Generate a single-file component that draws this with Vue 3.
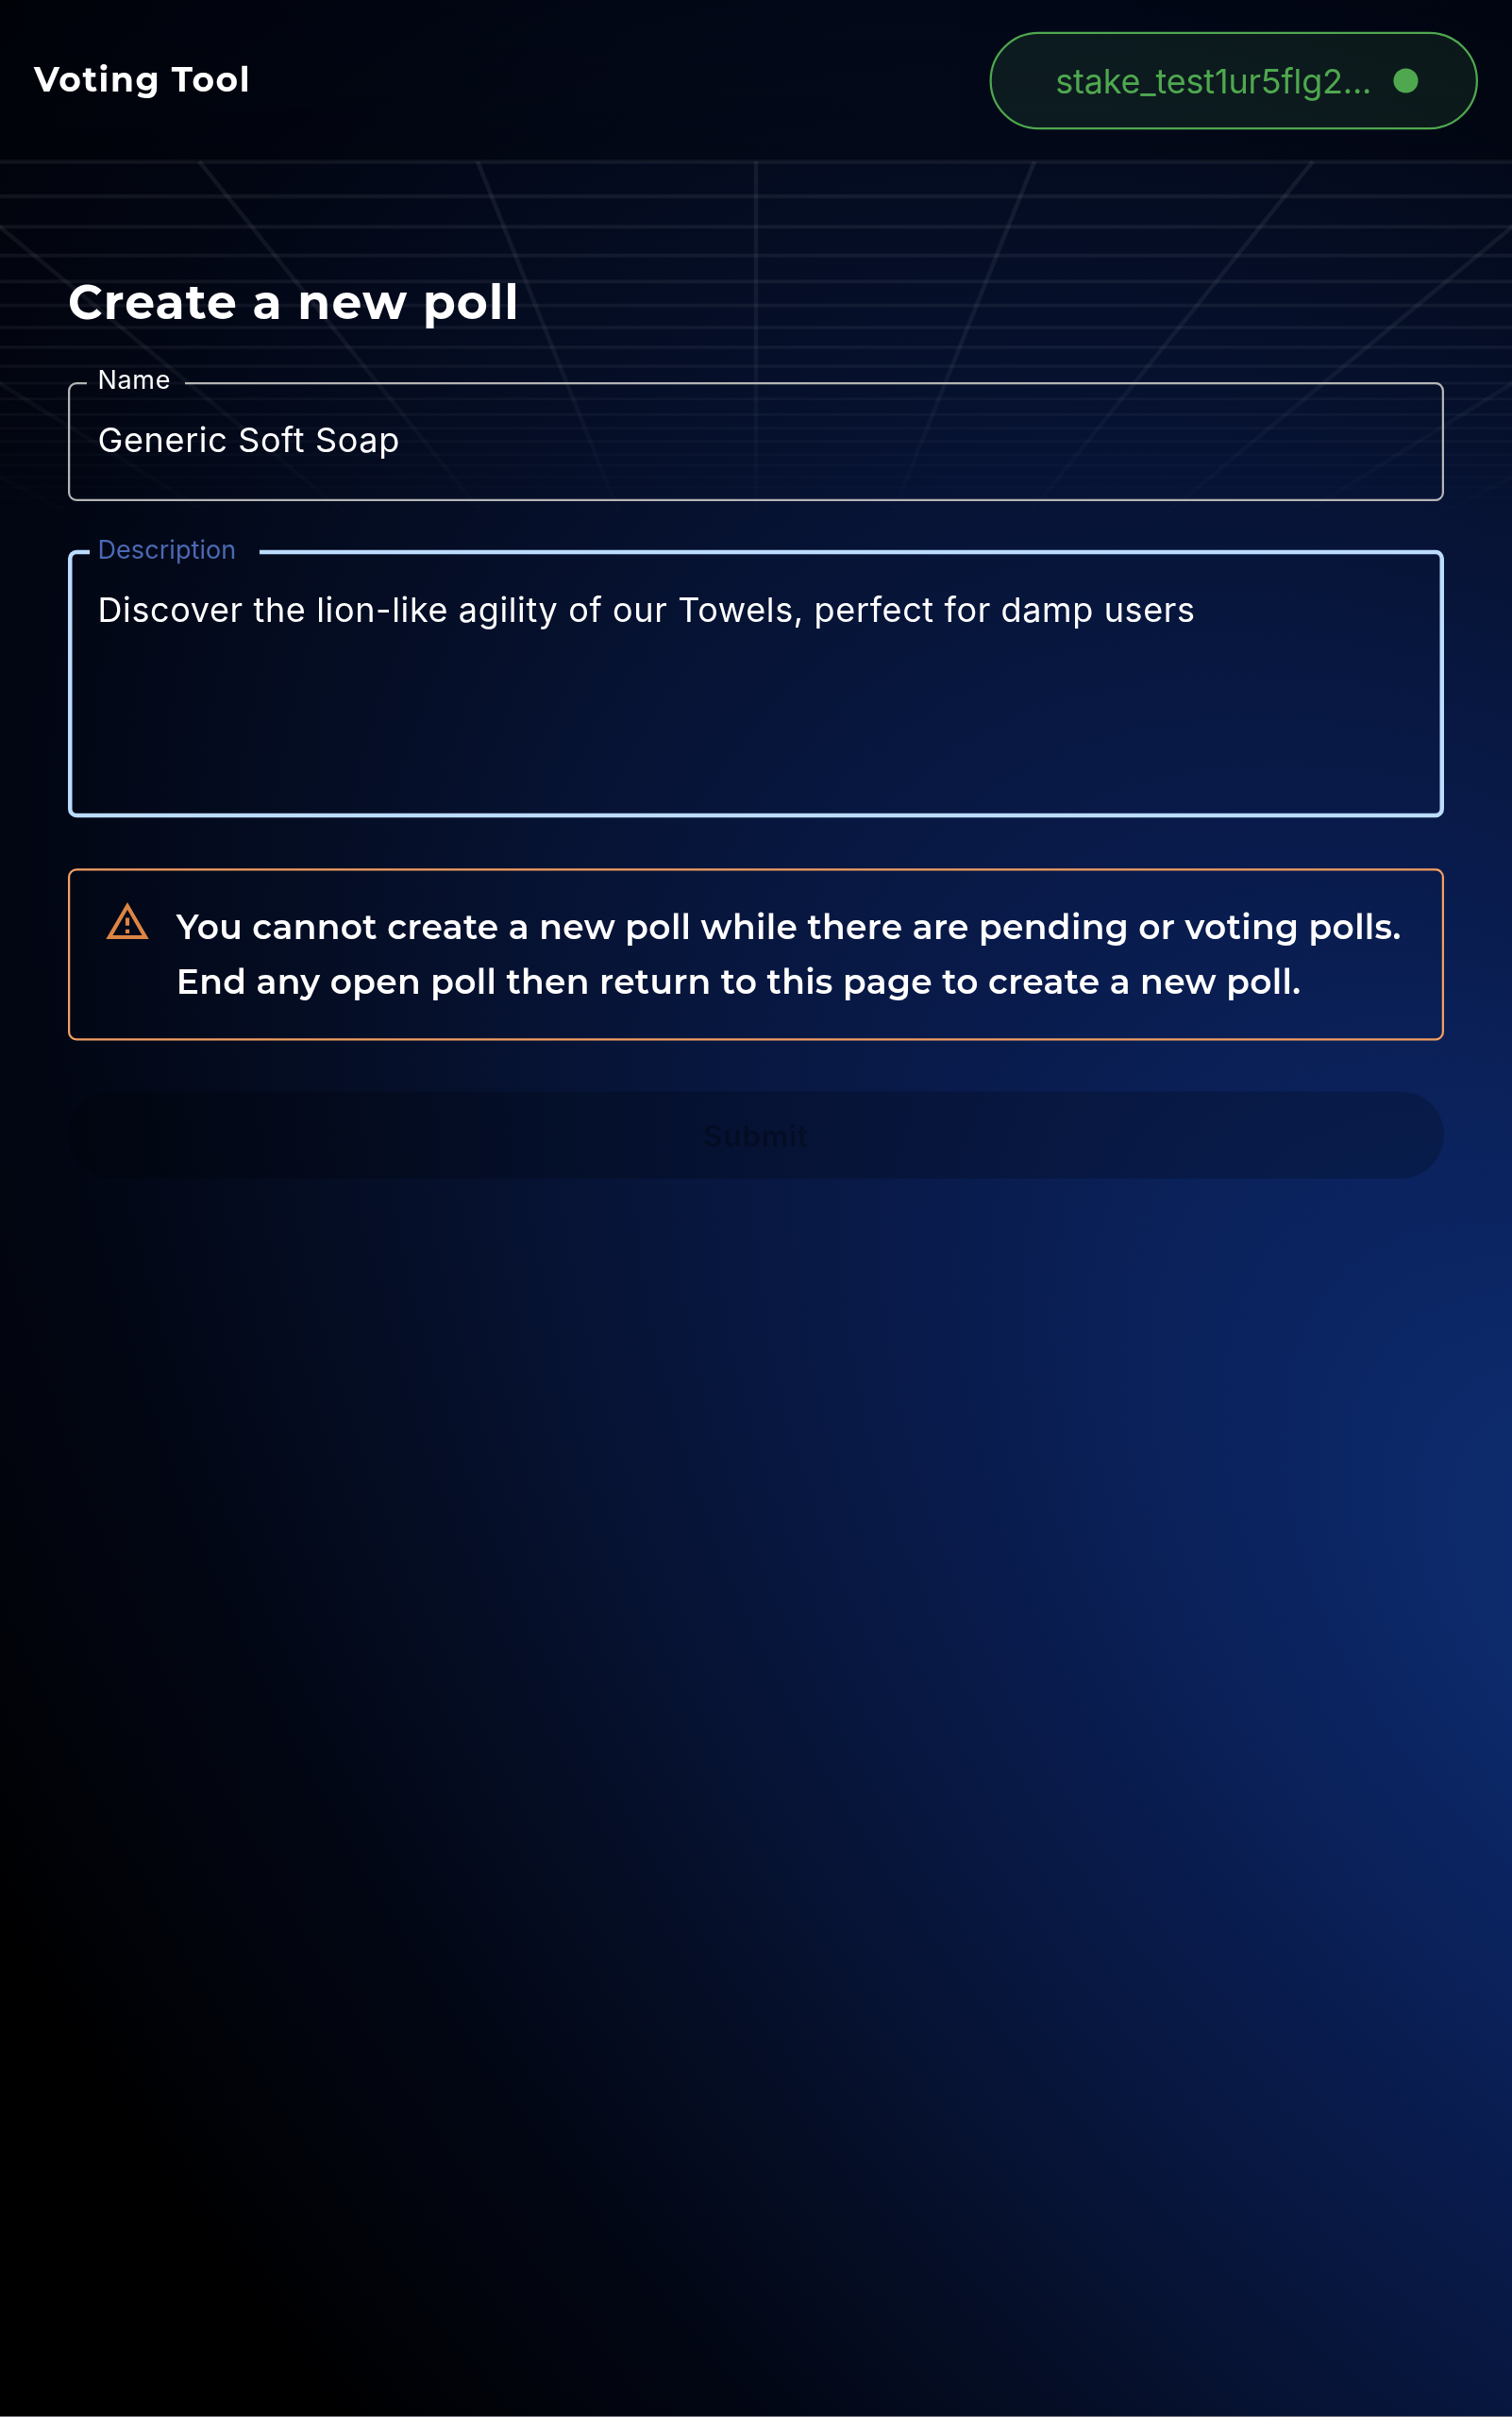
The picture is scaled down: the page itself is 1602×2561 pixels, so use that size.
<script setup>
const rows = [171.3, 208, 240.3, 270.7, 298.3, 323.7, 347, 368, 388, 406, 422.7, 439.3, 453.7, 467.7, 481.7, 493.3, 505.7, 516.7, 526.7, 536.7]
const columns = Array.from({ length: 17 }, (_, i) => i - 8)
</script>

<template>
  <div class="page">
    <svg class="backdrop" viewBox="0 0 1602 2561" aria-hidden="true">
      <defs>
        <radialGradient id="glow" gradientUnits="userSpaceOnUse" cx="0" cy="0" r="1" gradientTransform="translate(1770 1720) rotate(47) scale(2700 1620)">
          <stop offset="0" stop-color="#0e2d73" />
          <stop offset=".09" stop-color="#0d2a6b" />
          <stop offset=".2" stop-color="#0b2460" />
          <stop offset=".36" stop-color="#091b4c" />
          <stop offset=".5" stop-color="#07153a" />
          <stop offset=".64" stop-color="#050e26" />
          <stop offset=".8" stop-color="#020613" />
          <stop offset=".92" stop-color="#010309" />
          <stop offset="1" stop-color="#000001" />
        </radialGradient>
        <linearGradient id="fade" x1="0" x2="0" y1="168" y2="565" gradientUnits="userSpaceOnUse">
          <stop offset="0" stop-color="#fff" />
          <stop offset=".5" stop-color="#fff" stop-opacity=".8" />
          <stop offset="1" stop-color="#fff" stop-opacity="0" />
        </linearGradient>
        <mask id="gridMask" maskUnits="userSpaceOnUse" x="0" y="168" width="1602" height="397">
          <rect y="168" width="1602" height="397" fill="url(#fade)" />
        </mask>
      </defs>
      <rect width="1602" height="2561" fill="url(#glow)" />
      <g mask="url(#gridMask)" stroke="#fff" stroke-opacity=".065" fill="none">
        <line v-for="(y, i) in rows" :key="y" x1="0" x2="1602" :y1="y" :y2="y" :stroke-width="4.4 - i * 0.13" />
        <line v-for="c in columns" :key="c" :x1="801 + c * 295" y1="171" :x2="801 + c * 295 * 0.4625" y2="565" stroke-width="4.6" />
      </g>
    </svg>

    <div class="screen">
      <header class="header">
        <div class="brand">Voting Tool</div>
        <button class="wallet">
          <span class="address">stake_test1ur5flg2...</span>
          <svg class="dot" viewBox="0 0 12 12"><circle cx="6" cy="6" r="5.8" /></svg>
        </button>
      </header>

      <main class="content">
        <h1 class="title">Create a new poll</h1>

        <fieldset class="field name">
          <legend><span class="label">Name</span></legend>
          <div class="value">Generic Soft Soap</div>
        </fieldset>

        <fieldset class="field description">
          <legend><span class="label">Description</span></legend>
          <div class="value">Discover the lion-like agility of our Towels, perfect for damp users</div>
        </fieldset>

        <div class="alert">
          <svg class="warn" viewBox="0 0 24 24"><path d="M12 5.99L19.53 19H4.47L12 5.99M12 2L1 21h22L12 2zm1 14h-2v2h2v-2zm0-6h-2v4h2v-4z" /></svg>
          <div class="message">
            You cannot create a new poll while there are pending or voting polls.<br />
            End any open poll then return to this page to create a new poll.
          </div>
        </div>

        <button class="submit" disabled>Submit</button>
      </main>
    </div>
  </div>
</template>

<style>
body { margin: 0; background: #000; }
</style>

<style scoped>
.page {
  position: relative;
  box-sizing: border-box;
  width: 1602px;
  height: 2561px;
  overflow: hidden;
  border-bottom: 1px solid #77757f;
  font-family: Inter, sans-serif;
  color: #fff;
}
.backdrop { position: absolute; inset: 0; width: 1602px; height: 2561px; }
/* The layout is authored at 712px and enlarged to the page. */
.screen {
  position: relative;
  width: 712px;
  height: 1138px;
  transform: scale(2.25);
  transform-origin: 0 0;
}
.header {
  display: flex;
  justify-content: space-between;
  align-items: center;
  box-sizing: border-box;
  height: 76px;
  padding: 0 16px;
  background: linear-gradient(rgba(0, 0, 0, 0), rgba(0, 0, 0, .25));
}
.brand {
  font: 700 16px/24px Montserrat, Inter, sans-serif;
  letter-spacing: .66px;
  white-space: nowrap;
}
.wallet {
  display: flex;
  align-items: center;
  justify-content: space-between;
  box-sizing: border-box;
  width: 230px;
  height: 46px;
  padding: 0 27.4px 0 30px;
  border: 1px solid #4fa84f;
  border-radius: 23px;
  background: rgba(79, 168, 79, .12);
  color: #4fa84f;
  font: 400 16px/20px Inter, sans-serif;
}
.address { letter-spacing: -.09px; white-space: nowrap; }
.dot { flex: none; width: 12px; height: 12px; fill: #4fa84f; }
.content {
  display: flex;
  flex-direction: column;
  padding: 53px 32px 0;
}
.title {
  margin: 0;
  font: 700 22.4px/27px Montserrat, Inter, sans-serif;
  letter-spacing: .54px;
  white-space: nowrap;
}
.field {
  box-sizing: border-box;
  width: 648px;
  margin: 0;
  padding: 0 13px;
  border: 1px solid #b5b5b5;
  border-radius: 4px;
}
.field legend { height: 12px; margin-left: -5px; padding: 0 0 0 5px; box-sizing: border-box; }
.label { display: block; font: 400 12px/10.6px Inter, sans-serif; letter-spacing: .3px; white-space: nowrap; }
.name { height: 62px; margin-top: 18px; }
.name legend { width: 46px; }
.value { margin-top: 10px; font: 400 16px/23px Inter, sans-serif; letter-spacing: .28px; white-space: nowrap; }
.description { height: 131.3px; margin-top: 17.7px; border: 2px solid #bbdcff; padding: 0 12px; }
.description legend { width: 80px; margin-left: -4px; padding-left: 4px; color: #4b69b3; }
.description .label { letter-spacing: .03px; }
.alert {
  display: flex;
  box-sizing: border-box;
  height: 81.4px;
  margin-top: 23.6px;
  border: 1px solid #f39f62;
  border-radius: 4px;
}
.warn { width: 22px; height: 22px; flex: none; margin: 13px 12px 0 16px; fill: #dd8544; }
.message { padding-top: 14.7px; font: 600 16px/25.6px Montserrat, Inter, sans-serif; letter-spacing: .145px; white-space: nowrap; }
.submit {
  height: 41px;
  margin-top: 23.6px;
  padding: 1px 0 0;
  border: 0;
  border-radius: 21px;
  background: rgba(0, 0, 0, .2);
  color: rgba(0, 0, 0, .3);
  font: 600 14px/20px Inter, sans-serif;
  letter-spacing: .35px;
}
</style>
